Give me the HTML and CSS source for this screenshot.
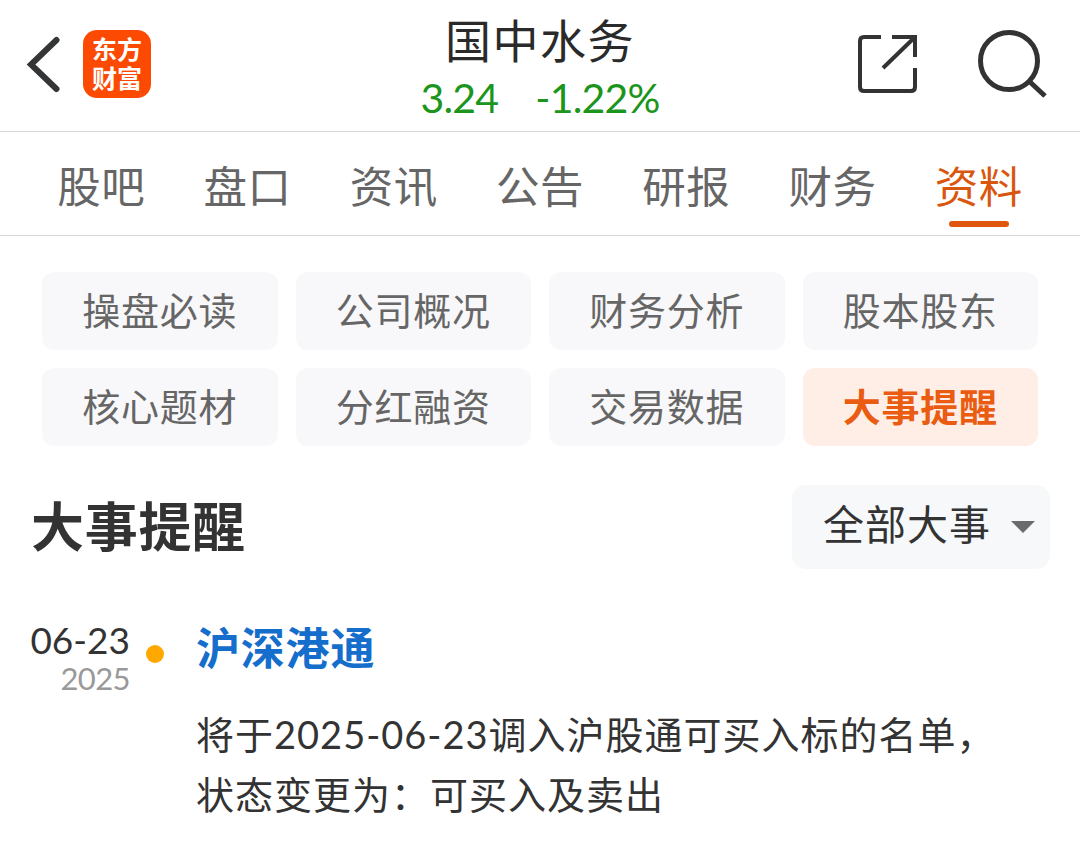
FILE: index.html
```
<!DOCTYPE html>
<html lang="zh-CN">
<head>
  <meta charset="UTF-8">
  <title>国中水务 - 大事提醒</title>
  <link rel="stylesheet" href="styles.css">
</head>
<body>
  <!-- Top bar -->
  <header class="top-bar">
    <div class="top-left">
      <svg class="back-icon" width="36" height="58" viewBox="0 0 36 58">
        <path d="M31.5 5L6 29.5L31.5 54" fill="none" stroke="#333537" stroke-width="6" stroke-linecap="round"/>
      </svg>
      <div class="logo">
        <span>东方</span>
        <span>财富</span>
      </div>
    </div>

    <div class="stock">
      <h1>国中水务</h1>
      <p class="quote"><span class="price">3.24</span><span class="change">-1.22%</span></p>
    </div>

    <div class="top-right">
      <svg width="60" height="60" viewBox="0 0 60 60" fill="none" stroke="#333" stroke-width="4">
        <path d="M23 3H6Q2 3 2 7V53Q2 57 6 57H53Q57 57 57 53V34"/>
        <path d="M34 3H57V23M55 5L25 34"/>
      </svg>
      <svg width="70" height="70" viewBox="0 0 70 70" fill="none" stroke="#333">
        <circle cx="31" cy="32" r="28.5" stroke-width="5"/>
        <path d="M52 53L67 67" stroke-width="5"/>
      </svg>
    </div>
  </header>

  <!-- Tabs -->
  <nav class="tabs">
    <a>股吧</a>
    <a>盘口</a>
    <a>资讯</a>
    <a>公告</a>
    <a>研报</a>
    <a>财务</a>
    <a class="active">资料</a>
  </nav>

  <section class="chips">
    <a>操盘必读</a>
    <a>公司概况</a>
    <a>财务分析</a>
    <a>股本股东</a>
    <a>核心题材</a>
    <a>分红融资</a>
    <a>交易数据</a>
    <a class="active">大事提醒</a>
  </section>

  <div class="section-head">
    <h2>大事提醒</h2>
    <button class="filter">全部大事<span class="arrow"></span></button>
  </div>

  <!-- Events -->
  <div class="event">
    <div class="date">
      <div class="day">06-23</div>
      <div class="year">2025</div>
    </div>
    <span class="dot"></span>
    <div class="event-body">
      <h3>沪深港通</h3>
      <p>将于<span class="num">2025-06-23</span>调入沪股通可买入标的名单，<br>状态变更为：可买入及卖出</p>
    </div>
  </div>
</body>
</html>
```
FILE: styles.css
```
* {
  box-sizing: border-box;
}

body {
  font-family: "Lato", "Noto Sans CJK SC", sans-serif;
  margin: 0;
  background: #fff;
  color: #333;
}

h1, h2, h3, p {
  margin: 0;
}

/* Top bar */
.top-bar {
  display: grid;
  grid-template-columns: 1fr auto 1fr;
  height: 132px;
  padding: 0 32px 0 25px;
  border-bottom: 1px solid #d5d7d8;
}

.top-left {
  display: flex;
  align-items: flex-start;
  gap: 22px;
  padding-top: 30px;
}

.back-icon {
  margin-top: 5px;
}

.logo {
  display: flex;
  flex-direction: column;
  align-items: center;
  width: 68px;
  height: 68px;
  padding-top: 5px;
  border-radius: 14px;
  background: #fd4a03;
  color: #fff;
  font-size: 25px;
  font-weight: bold;
  line-height: 29px;
}

.stock {
  text-align: center;
  padding: 13px 0 0 7px;
}

.stock h1 {
  font-size: 46px;
  font-weight: 400;
  line-height: 56px;
  letter-spacing: 1.5px;
  color: #2a2a2a;
}

.quote {
  display: flex;
  justify-content: center;
  gap: 37px;
  font-size: 41px;
  line-height: 58px;
  color: #1b951b;
}

.price {
  letter-spacing: -0.8px;
}

.change {
  letter-spacing: -0.8px;
}

.top-right {
  display: flex;
  justify-content: flex-end;
  align-items: flex-start;
  gap: 60px;
  padding-top: 29px;
}

.top-right svg:first-child {
  margin-top: 5px;
}

/* Tabs */
.tabs {
  display: grid;
  grid-template-columns: repeat(7, 1fr);
  height: 104px;
  padding: 0 28px;
  border-bottom: 1px solid #d5d7d8;
}

.tabs a {
  display: flex;
  flex-direction: column;
  align-items: center;
  padding-top: 24px;
  font-size: 43.5px;
  line-height: 60px;
  letter-spacing: 0.5px;
  color: #666;
}

.tabs .active {
  color: #d9560f;
}

.tabs .active::after {
  content: "";
  width: 60px;
  height: 6px;
  margin-top: 5px;
  border-radius: 3px;
  background: #e0560f;
}

.chips {
  display: grid;
  grid-template-columns: repeat(4, 1fr);
  gap: 18px;
  padding: 36px 42px 0;
}

.chips a {
  height: 78px;
  border-radius: 12px;
  background: #f8f8fa;
  color: #666;
  font-size: 38px;
  line-height: 76px;
  letter-spacing: 0.8px;
  text-align: center;
}

.chips .active {
  background: #ffeee6;
  color: #e95c12;
  font-weight: bold;
}

.section-head {
  display: flex;
  justify-content: space-between;
  align-items: center;
  padding: 39px 30px 0 31px;
}

.section-head h2 {
  font-size: 53px;
  line-height: 82px;
  letter-spacing: 0.7px;
}

.filter {
  display: flex;
  align-items: center;
  justify-content: space-between;
  width: 258px;
  height: 84px;
  padding: 0 15px 0 31px;
  border: none;
  border-radius: 14px;
  background: #f7f8fa;
  color: #333;
  font-family: inherit;
  font-size: 41px;
  line-height: 78px;
  letter-spacing: 1px;
  padding-bottom: 5px;
}

.arrow {
  margin-top: 4px;
  border: 12px solid transparent;
  border-top-color: #6b6b6b;
  border-bottom: none;
}

/* Events */
.event {
  display: flex;
  padding: 46px 30px 0;
}

.date {
  width: 100px;
  text-align: right;
}

.day {
  font-size: 37px;
  line-height: 49px;
}

.year {
  font-size: 31px;
  line-height: 29px;
  letter-spacing: -0.6px;
  color: #999;
}

.dot {
  width: 18px;
  height: 18px;
  margin: 30px 32px 0 16px;
  border-radius: 50%;
  background: #ffa800;
}

.event-body h3 {
  font-size: 44px;
  line-height: 66px;
  letter-spacing: 0.8px;
  color: #156dcc;
}

.event-body p {
  margin-top: 23px;
  font-size: 38px;
  line-height: 60px;
  letter-spacing: 1px;
  white-space: nowrap;
}

.num {
  letter-spacing: 1px;
}
```
